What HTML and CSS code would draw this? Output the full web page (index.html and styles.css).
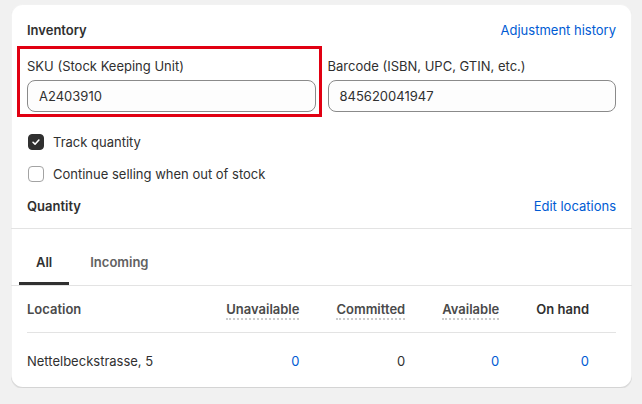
FILE: index.html
```html
<!DOCTYPE html>
<html lang="en">
<head>
<meta charset="utf-8">
<title>Inventory</title>
<link rel="stylesheet" href="styles.css">
</head>
<body>
<div class="card">
  <div class="card-body">
    <div class="head-row">
      <h2 class="title">Inventory</h2>
      <a class="link" href="#">Adjustment history</a>
    </div>
    <div class="fields">
      <div class="field sku">
        <label class="label">SKU (Stock Keeping Unit)</label>
        <div class="input">A2403910</div>
        <div class="highlight"></div>
      </div>
      <div class="field">
        <label class="label">Barcode (ISBN, UPC, GTIN, etc.)</label>
        <div class="input">845620041947</div>
      </div>
    </div>
    <div class="checks">
      <label class="check"><span class="box checked"><svg viewBox="0 0 16 16" width="16" height="16"><path d="M4.6 8.3l2.3 2.2 4.4-4.8" fill="none" stroke="#fff" stroke-width="1.8" stroke-linecap="round" stroke-linejoin="round"/></svg></span>Track quantity</label>
      <label class="check"><span class="box"></span>Continue selling when out of stock</label>
    </div>
    <div class="head-row">
      <h3 class="title">Quantity</h3>
      <a class="link" href="#">Edit locations</a>
    </div>
  </div>
  <div class="tabs">
    <button class="tab active">All</button>
    <button class="tab">Incoming</button>
  </div>
  <div class="table-wrap">
    <table class="stock">
      <thead>
        <tr>
          <th class="loc">Location</th>
          <th class="num"><span class="dotted">Unavailable</span></th>
          <th class="num"><span class="dotted">Committed</span></th>
          <th class="num"><span class="dotted">Available</span></th>
          <th class="num last plain">On hand</th>
        </tr>
      </thead>
      <tbody>
        <tr>
          <td class="loc">Nettelbeckstrasse, 5</td>
          <td class="num blue">0</td>
          <td class="num">0</td>
          <td class="num blue">0</td>
          <td class="num last blue">0</td>
        </tr>
      </tbody>
    </table>
  </div>
</div>
</body>
</html>
```

FILE: styles.css
```css
* { box-sizing: border-box; }

html, body {
  margin: 0;
  background: #f1f1f1;
}

body {
  padding: 4px 10px 0 11px;
  font-family: Inter, "Noto Sans", "Liberation Sans", sans-serif;
  font-size: 13px;
  line-height: 20px;
  color: #303030;
}

.card {
  background: #ffffff;
  border-radius: 12px;
  box-shadow: 0 1px 0 0 rgba(26, 26, 26, 0.07), inset 0 -1px 0 0 rgba(0, 0, 0, 0.12), inset 0 0 0 1px rgba(0, 0, 0, 0.05);
  overflow: hidden;
  height: 384px;
}

.card-body {
  padding: 16px 16px 12px;
}

.head-row {
  display: flex;
  justify-content: space-between;
  align-items: center;
  height: 20px;
}

.title {
  margin: 0;
  font-size: 13px;
  font-weight: 600;
  line-height: 20px;
  color: #303030;
}

.link {
  color: #005bd3;
  text-decoration: none;
}

.fields {
  display: grid;
  grid-template-columns: 1fr 1fr;
  column-gap: 12px;
  margin-top: 16px;
}

.field {
  position: relative;
  display: flex;
  flex-direction: column;
  gap: 4px;
}

.label {
  display: block;
  line-height: 20px;
}

.input {
  height: 32px;
  display: flex;
  align-items: center;
  padding: 0 11px;
  border: 1px solid #8a8a8a;
  border-radius: 8px;
  background: #fdfdfd;
  color: #303030;
}

.highlight {
  position: absolute;
  top: -10px;
  left: -10px;
  right: -6px;
  bottom: -5px;
  border: 3px solid #e10012;
  pointer-events: none;
}

.checks {
  display: flex;
  flex-direction: column;
  gap: 12px;
  margin-top: 20px;
  margin-bottom: 12px;
}

.check {
  display: flex;
  align-items: center;
  gap: 9px;
  height: 20px;
  padding-left: 1px;
}

.box {
  width: 16px;
  height: 16px;
  border-radius: 4px;
  border: 1px solid #a3a3a3;
  background: #fff;
  display: flex;
  align-items: center;
  justify-content: center;
}

.box.checked {
  border-color: #303030;
  background: #303030;
}

.box svg {
  display: block;
}

.tabs {
  display: flex;
  gap: 4px;
  padding: 10px 8px 0 8px;
  border-top: 1px solid #e3e3e3;
  border-bottom: 1px solid #e3e3e3;
}

.tab {
  height: 46px;
  padding: 3px 17px 0;
  border: 0;
  border-bottom: 3px solid transparent;
  background: transparent;
  font-family: inherit;
  font-size: 13px;
  font-weight: 600;
  color: #616161;
}

.tab.active {
  color: #303030;
  border-bottom-color: #303030;
}

.table-wrap {
  padding: 0 16px;
}

.stock {
  width: 100%;
  border-collapse: collapse;
}

.stock th {
  height: 46px;
  padding-top: 2px;
  font-weight: 600;
  color: #4a4a4a;
  border-bottom: 1px solid #e3e3e3;
  white-space: nowrap;
}

.stock td {
  height: 56px;
  padding-top: 2px;
  white-space: nowrap;
  color: #303030;
}

.stock .loc {
  width: 100%;
  text-align: left;
  padding-left: 0;
  padding-right: 0;
}

.stock .num {
  text-align: right;
  padding-left: 37px;
  padding-right: 0;
}

.stock .last {
  padding-right: 27px;
}

.stock th.plain {
  color: #303030;
}

.dotted {
  display: inline-block;
  line-height: 18px;
  padding-top: 2px;
  border-bottom: 2px dotted #cccccc;
}

.stock td.blue {
  color: #005bd3;
}
```
